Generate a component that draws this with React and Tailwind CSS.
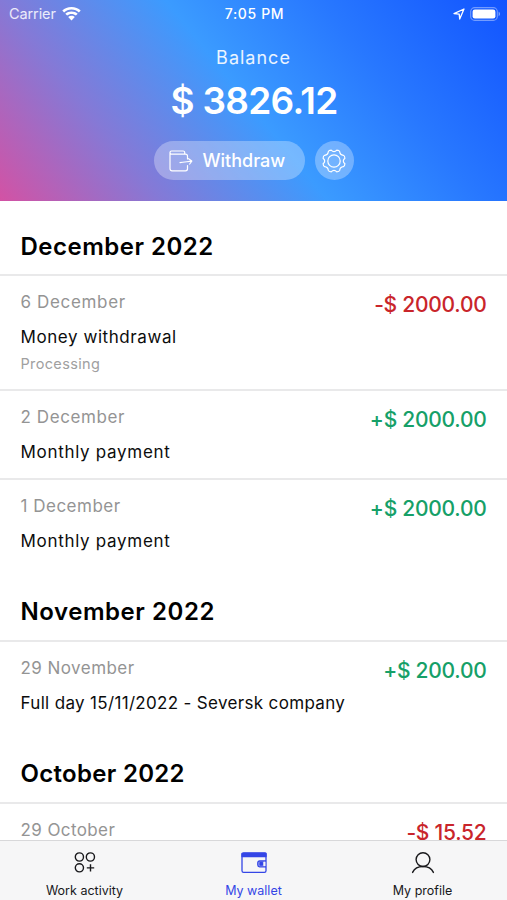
import React from 'react';

const sections = [
  {
    title: 'December 2022',
    titleClass: 'h-[73px] tracking-[0.5px]',
    items: [
      { date: '6 December', dateClass: 'tracking-[0.65px]', text: 'Money withdrawal', textClass: 'tracking-[0.57px]', status: 'Processing', amount: '-$ 2000.00' },
      { date: '2 December', dateClass: 'tracking-[0.6px]', text: 'Monthly payment', textClass: 'tracking-[0.7px]', amount: '+$ 2000.00' },
      { date: '1 December', dateClass: 'tracking-[0.5px]', text: 'Monthly payment', textClass: 'tracking-[0.7px]', amount: '+$ 2000.00' },
    ],
  },
  {
    title: 'November 2022',
    titleClass: 'h-[73.5px] tracking-[0.55px]',
    items: [{ date: '29 November', dateClass: 'tracking-[0.45px]', text: 'Full day 15/11/2022 - Seversk company', textClass: 'tracking-[0.33px]', amount: '+$ 200.00' }],
  },
  {
    title: 'October 2022',
    titleClass: 'h-[73.5px] tracking-[0.3px]',
    items: [{ date: '29 October', dateClass: 'tracking-[0.4px]', text: 'Monthly payment', textClass: 'tracking-[0.7px]', amount: '-$ 15.52' }],
  },
];

const WifiIcon = () => (
  <svg width="19" height="14" viewBox="0 0 19 14" fill="#fff">
    <path d="M9.5 0C13.2 0 16.4 1.4 18.7 3.6L16.9 5.4C15 3.6 12.4 2.5 9.5 2.5S4 3.6 2.1 5.4L.3 3.6C2.6 1.4 5.8 0 9.5 0Z" />
    <path d="M9.5 4.5C11.9 4.5 14.1 5.4 15.7 6.8L13.9 8.6C12.7 7.6 11.2 7 9.5 7S6.3 7.6 5.1 8.6L3.3 6.8C4.9 5.4 7.1 4.5 9.5 4.5Z" />
    <path d="M9.5 8.8C10.8 8.8 11.9 9.3 12.8 10L9.5 13.4 6.2 10C7.1 9.3 8.2 8.8 9.5 8.8Z" />
  </svg>
);

const LocationIcon = () => (
  <svg width="12" height="12" viewBox="0 0 12 12" fill="none" stroke="#fff" strokeWidth="1.3" strokeLinejoin="round">
    <path d="M11 1 1 5.6 6.2 6.1 6.7 11Z" />
  </svg>
);

const BatteryIcon = () => (
  <svg width="31" height="14" viewBox="0 0 31 14">
    <rect x=".7" y=".6" width="26.6" height="12.8" rx="4" fill="none" stroke="#fff" strokeOpacity=".4" strokeWidth="1.1" />
    <rect x="2.6" y="2.5" width="22.8" height="9" rx="2.3" fill="#fff" />
    <path d="M28.6 4.8C30.5 5.5 30.5 8.5 28.6 9.2Z" fill="#fff" fillOpacity=".45" />
  </svg>
);

const WithdrawIcon = () => (
  <svg width="24" height="22" viewBox="0 0 24 22" fill="none" stroke="#fff" strokeWidth="1.2" strokeLinecap="round" strokeLinejoin="round">
    <path d="M18.5 15.5V18.8a2 2 0 0 1-2 2H3a2 2 0 0 1-2-2V2.6M18.5 9V6.2a2 2 0 0 0-2-2H2.6a1.6 1.6 0 0 1 0-3.2H14.2a1.5 1.5 0 0 1 1.5 1.5V4" />
    <path d="M11 12.7C14 12 18 11.8 22.6 11.2M19.6 8.7 22.8 11.1 20.7 14" />
  </svg>
);

const GearIcon = () => (
  <svg width="24" height="24" viewBox="0 0 24 24" fill="none" stroke="#fff" strokeWidth="1.2" strokeLinejoin="round">
    <circle cx="12" cy="12" r="6.2" />
    <path d="M9.2 1.1Q12 4.3 14.8 1.1Q17.2 1.2 17.7 2.6Q18 6 21.4 6.3Q22.8 6.8 22.9 9.2Q19.7 12 22.9 14.8Q22.8 17.2 21.4 17.7Q18 18 17.7 21.4Q17.2 22.8 14.8 22.9Q12 19.7 9.2 22.9Q6.8 22.8 6.3 21.4Q6 18 2.6 17.7Q1.2 17.2 1.1 14.8Q4.3 12 1.1 9.2Q1.2 6.8 2.6 6.3Q6 6 6.3 2.6Q6.8 1.2 9.2 1.1Z" />
  </svg>
);

const ActivityIcon = () => (
  <svg width="22" height="22" viewBox="0 0 22 22" fill="none" stroke="#18181b" strokeWidth="1.4">
    <circle cx="5.4" cy="5" r="4.1" />
    <circle cx="16.4" cy="5" r="4.1" />
    <circle cx="5.4" cy="15.8" r="4.1" />
    <path d="M16.5 12.2V19.6M12.8 15.9H20.2" />
  </svg>
);

const WalletIcon = () => (
  <svg width="26" height="22" viewBox="0 0 26 22" fill="none" stroke="#3446e6" strokeWidth="1.3" strokeLinejoin="round">
    <path d="M1 2.6V18.8a1.6 1.6 0 0 0 1.6 1.6H23.4a1.6 1.6 0 0 0 1.6-1.6V2A1 1 0 0 0 24 1H2.6a1.6 1.6 0 0 0-1.6 1.6Z" />
    <path d="M1 1.5H25V4.6H1Z" fill="#3446e6" />
    <path d="M25 9H18.6a1.8 1.8 0 0 0-1.8 1.8V13a1.8 1.8 0 0 0 1.8 1.8H25" fill="#3446e6" fillOpacity=".4" />
    <rect x="19" y="10.7" width="2.4" height="2.4" fill="#3446e6" />
    <rect x="22.6" y="9.7" width="1.8" height="4.4" fill="#f6f6f7" stroke="none" />
  </svg>
);

const ProfileIcon = () => (
  <svg width="24" height="22" viewBox="0 0 24 22" fill="none" stroke="#18181b" strokeWidth="1.4" strokeLinecap="round">
    <circle cx="12" cy="7.6" r="6.9" />
    <path d="M1.6 20.4C3.3 16.8 7.2 14.5 12 14.5S20.7 16.8 22.4 20.4" />
  </svg>
);

const Transaction = ({ item }) => (
  <div className={`flex shrink-0 justify-between border-t-2 border-[#e9e9ea] px-[20.5px] pt-[14px] ${item.status ? 'h-[115px]' : 'h-[88.5px]'}`}>
    <div>
      <p className={`text-[17px] leading-6 text-[#949494] ${item.dateClass}`}>{item.date}</p>
      <p className={`mt-[11px] text-[17px] leading-6 text-[#0c0c0c] ${item.textClass}`}>{item.text}</p>
      {item.status && <p className="mt-[4px] text-[14.5px] leading-[22px] tracking-[0.35px] text-[#a0a0a0]">{item.status}</p>}
    </div>
    <p className={`mt-px h-7 text-[21px] leading-7 font-medium tracking-[-0.25px] ${item.amount[0] === '-' ? 'text-[#c9252b]' : 'text-[#16a068]'}`}>
      {item.amount}
    </p>
  </div>
);

const Tab = ({ icon, label, active }) => (
  <div className={`flex w-[169px] flex-col items-center pt-[11px] text-[12.5px] leading-4 ${active ? 'text-[#3446e6]' : 'text-[#18181b]'}`}>
    <div className="flex h-[22px] items-center">{icon}</div>
    <span className="mt-[9px] whitespace-nowrap">{label}</span>
  </div>
);

export default function App() {
  return (
    <div className="flex h-[900px] w-[507px] flex-col overflow-hidden bg-white font-[Inter,sans-serif]">
      <header className="flex h-[201px] shrink-0 flex-col bg-[linear-gradient(51deg,#d352a4_0%,#8579d6_24%,#3b9bff_49%,#2878ff_72%,#1254ff_100%)] text-white">
        <div className="grid h-[27px] grid-cols-3 items-center pr-[6px] pl-[8px]">
          <div className="flex items-center gap-[6px] pl-px text-[14.5px] tracking-[-0.1px] text-white/85">
            Carrier
            <WifiIcon />
          </div>
          <div className="text-center text-[14px] font-medium tracking-[0.65px]">7:05 PM</div>
          <div className="flex items-center justify-end gap-[5px]">
            <LocationIcon />
            <BatteryIcon />
          </div>
        </div>
        <p className="mt-[19px] text-center text-[18px] leading-6 tracking-[1px] text-white/90">Balance</p>
        <p className="mt-[9px] pl-px text-center text-[37px] leading-[44px] font-semibold tracking-[-0.7px]">$ 3826.12</p>
        <div className="mt-[18px] flex justify-center gap-[10px]">
          <button className="flex h-[39px] w-[151px] items-center gap-[9px] rounded-full bg-white/30 pl-[15px] text-[18px] font-medium">
            <WithdrawIcon />
            <span className="pl-px">Withdraw</span>
          </button>
          <button className="flex h-[39px] w-[39px] items-center justify-center rounded-full bg-white/30">
            <GearIcon />
          </button>
        </div>
      </header>

      <main className="flex min-h-0 flex-1 flex-col overflow-hidden">
        {sections.map((section) => (
          <section key={section.title} className="shrink-0">
            <h2 className={`px-[20.5px] pt-[30px] text-[24px] leading-8 font-semibold text-black ${section.titleClass}`}>
              {section.title}
            </h2>
            {section.items.map((item) => (
              <Transaction key={item.date} item={item} />
            ))}
          </section>
        ))}
      </main>

      <nav className="flex h-[60px] shrink-0 border-t border-[#d8d8da] bg-[#f6f6f7]">
        <Tab icon={<ActivityIcon />} label="Work activity" />
        <Tab icon={<WalletIcon />} label="My wallet" active />
        <Tab icon={<ProfileIcon />} label="My profile" />
      </nav>
    </div>
  );
}
